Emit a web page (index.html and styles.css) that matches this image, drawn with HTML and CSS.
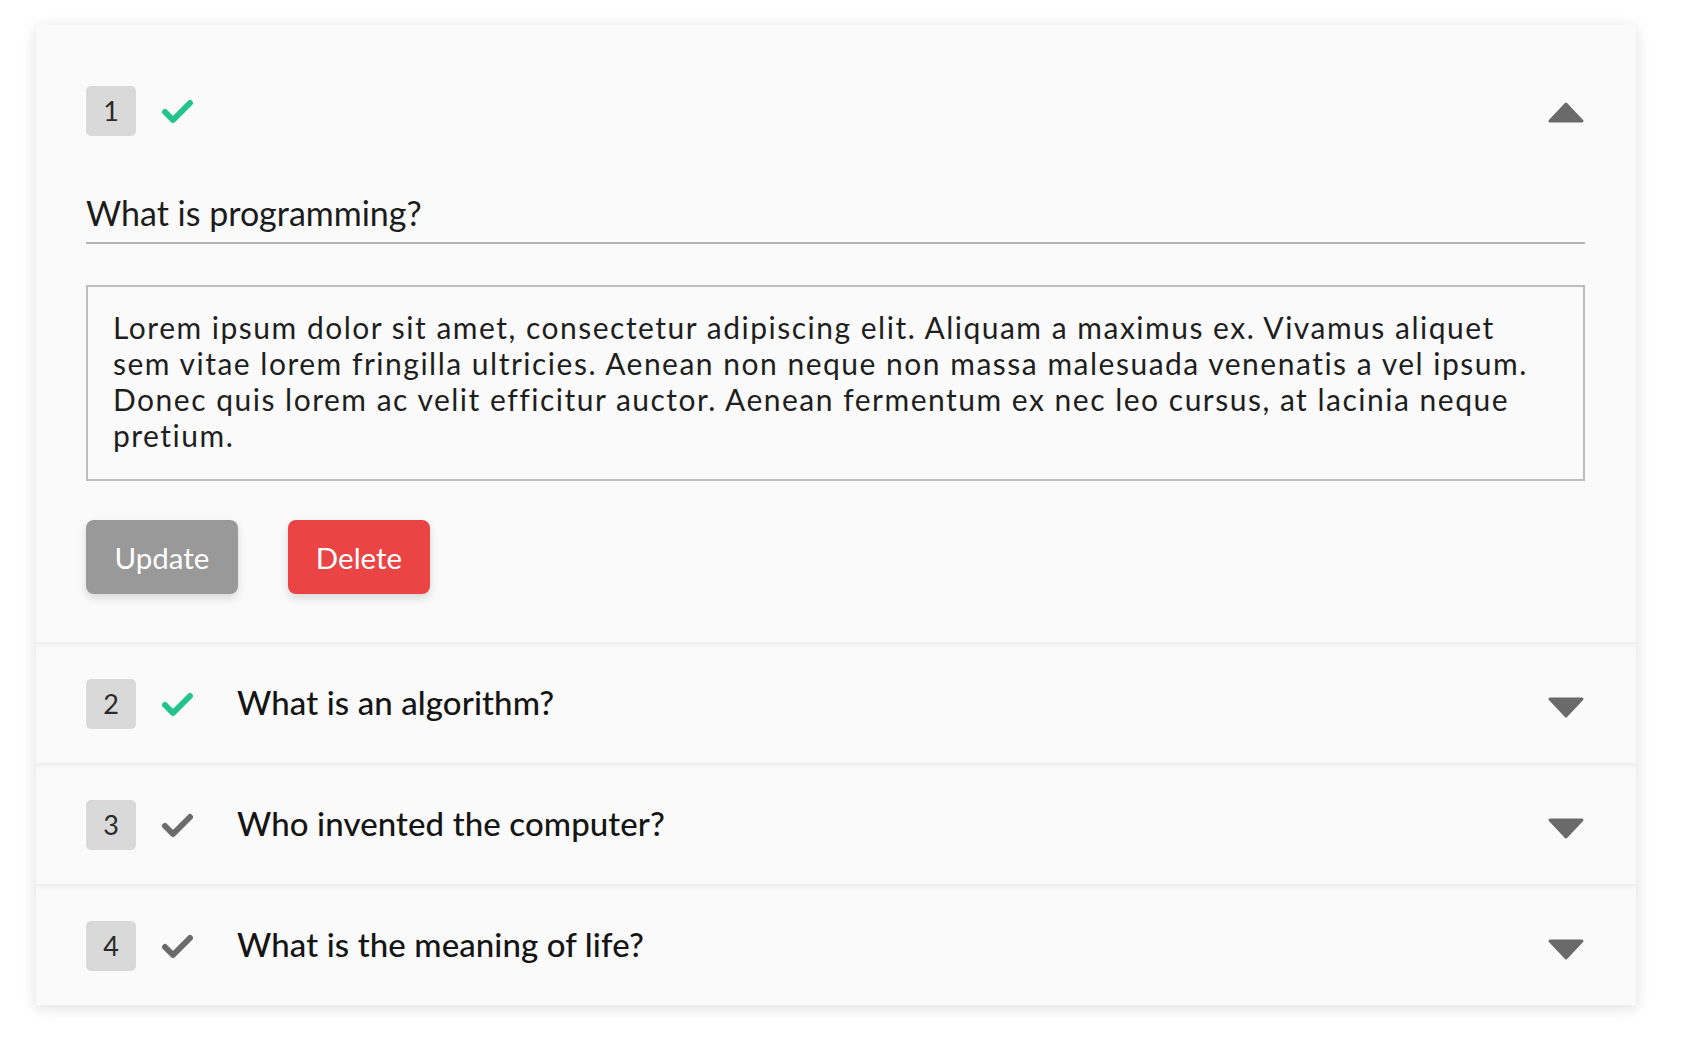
FILE: index.html
```html
<!DOCTYPE html>
<html lang="en">
<head>
<meta charset="utf-8">
<title>Questions</title>
<link rel="stylesheet" href="styles.css">
</head>
<body>
<div class="page">
  <div class="card">
    <section class="panel panel-open">
      <div class="head">
        <span class="num">1</span>
        <svg class="check check-done" viewBox="0 0 34 26" width="34" height="26"><path d="M5 14 L13 22 L30 5"/></svg>
        <span class="spacer"></span>
        <svg class="arrow arrow-up" viewBox="0 0 38 26" width="38" height="26"><path d="M3 22 L19 5 L35 22 Z"/></svg>
      </div>
      <div class="title-field">What is programming?</div>
      <div class="answer">Lorem ipsum dolor sit amet, consectetur adipiscing elit. Aliquam a maximus ex. Vivamus aliquet<br>sem vitae lorem fringilla ultricies. Aenean non neque non massa malesuada venenatis a vel ipsum.<br>Donec quis lorem ac velit efficitur auctor. Aenean fermentum ex nec leo cursus, at lacinia neque<br>pretium.</div>
      <div class="actions">
        <button class="btn btn-update">Update</button>
        <button class="btn btn-delete">Delete</button>
      </div>
    </section>
    <section class="panel row">
      <span class="num">2</span>
      <svg class="check check-done" viewBox="0 0 34 26" width="34" height="26"><path d="M5 14 L13 22 L30 5"/></svg>
      <span class="q">What is an algorithm?</span>
      <span class="spacer"></span>
      <svg class="arrow arrow-down" viewBox="0 0 38 26" width="38" height="26"><path d="M3 5 L19 22 L35 5 Z"/></svg>
    </section>
    <section class="panel row">
      <span class="num">3</span>
      <svg class="check check-todo" viewBox="0 0 34 26" width="34" height="26"><path d="M5 14 L13 22 L30 5"/></svg>
      <span class="q">Who invented the computer?</span>
      <span class="spacer"></span>
      <svg class="arrow arrow-down" viewBox="0 0 38 26" width="38" height="26"><path d="M3 5 L19 22 L35 5 Z"/></svg>
    </section>
    <section class="panel row">
      <span class="num">4</span>
      <svg class="check check-todo" viewBox="0 0 34 26" width="34" height="26"><path d="M5 14 L13 22 L30 5"/></svg>
      <span class="q">What is the meaning of life?</span>
      <span class="spacer"></span>
      <svg class="arrow arrow-down" viewBox="0 0 38 26" width="38" height="26"><path d="M3 5 L19 22 L35 5 Z"/></svg>
    </section>
  </div>
</div>
</body>
</html>
```

FILE: styles.css
```css
* { box-sizing: border-box; }
html, body { margin: 0; padding: 0; background: #ffffff; }
body {
  font-family: Lato, "Open Sans", "Liberation Sans", sans-serif;
  color: #1c1c1c;
}
.page {
  padding: 25px 0 40px 36px;
}
.card {
  width: 1600px;
  background: #fafafa;
  box-shadow: 0 3px 14px rgba(0, 0, 0, 0.13);
}
.panel {
  padding: 0 51px 0 50px;
}
.panel-open {
  padding-top: 61px;
  padding-bottom: 48px;
}
.head, .row {
  display: flex;
  align-items: center;
}
.row {
  height: 121px;
  border-top: 2px solid #efefef;
  box-shadow: inset 0 6px 6px -6px rgba(0, 0, 0, 0.06);
}
.num {
  flex: none;
  width: 50px;
  height: 50px;
  border-radius: 5px;
  background: #d9d9d9;
  color: #2a2a2a;
  font-size: 27px;
  line-height: 50px;
  text-align: center;
}
.check {
  flex: none;
  margin-left: 24px;
  fill: none;
  stroke-width: 6;
  stroke-linecap: round;
  stroke-linejoin: round;
}
.check-done { stroke: #23c48b; }
.check-todo { stroke: #6b6b6b; }
.spacer { flex: 1; }
.arrow {
  flex: none;
  fill: #6a6a6a;
  stroke: #6a6a6a;
  stroke-width: 3;
  stroke-linejoin: round;
}
.arrow-up { margin-top: 2px; }
.arrow-down { margin-top: 6px; }
.q {
  margin-left: 43px;
  padding-bottom: 4px;
  font-size: 33px;
  font-weight: 500;
  color: #151515;
  letter-spacing: 0.1px;
}
.title-field {
  margin-top: 54px;
  font-size: 34px;
  line-height: 45px;
  padding-bottom: 7px;
  border-bottom: 2px solid #b3b3b3;
  color: #1c1c1c;
}
.answer {
  margin-top: 41px;
  border: 2px solid #bdbdbd;
  padding: 22px 25px 26px;
  font-size: 30px;
  line-height: 36px;
  letter-spacing: 1.5px;
  color: #1e1e1e;
  white-space: nowrap;
}
.actions {
  margin-top: 39px;
  display: flex;
  gap: 50px;
}
.btn {
  height: 74px;
  border: 0;
  border-radius: 8px;
  padding: 0 20px;
  font-family: inherit;
  font-size: 29.5px;
  color: #ffffff;
  box-shadow: 0 4px 8px rgba(0, 0, 0, 0.14);
}
.btn-update { background: #999999; width: 152px; }
.btn-delete { background: #ea4444; width: 142px; }
```
